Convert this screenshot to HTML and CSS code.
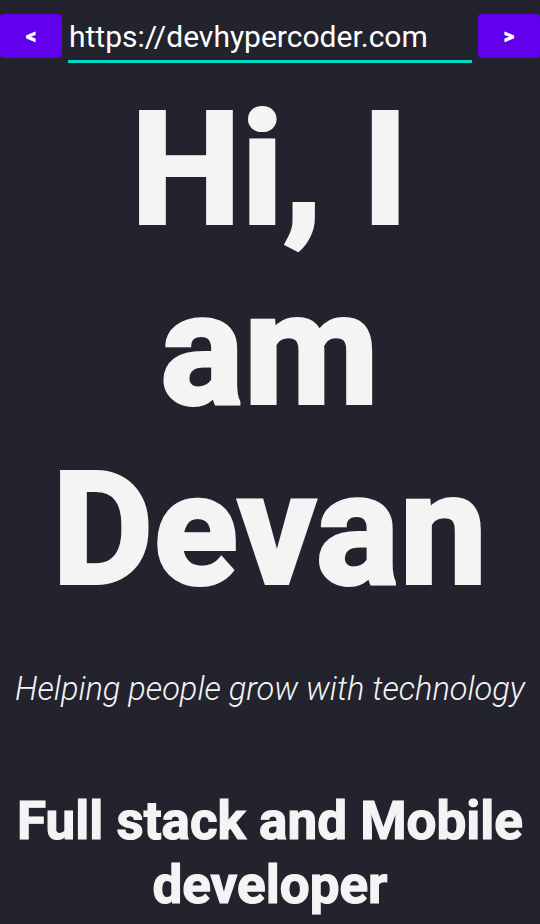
FILE: index.html
```html
<!DOCTYPE html>
<html>
<head>
<meta charset="utf-8">
<link rel="stylesheet" href="styles.css">
</head>
<body>
<div class="topbar">
  <button class="nav-btn">&lt;</button>
  <div class="url">https://devhypercoder.com</div>
  <button class="nav-btn">&gt;</button>
</div>
<main class="hero">
  <h1 class="title">Hi, I am Devan</h1>
  <p class="tagline">Helping people grow with technology</p>
  <h2 class="role">Full stack and Mobile developer</h2>
</main>
</body>
</html>
```
FILE: styles.css
```css
html, body {
  margin: 0;
  padding: 0;
  background: #23232e;
  height: 100%;
  overflow: hidden;
}
body {
  font-family: Roboto, "Liberation Sans", sans-serif;
  color: #f4f4f4;
}
.topbar {
  display: flex;
  align-items: flex-start;
  padding-top: 14px;
  gap: 6px;
}
.nav-btn {
  width: 62px;
  height: 44px;
  border: none;
  border-radius: 4px;
  background: #6200ee;
  color: #fff;
  font-family: Roboto, sans-serif;
  font-weight: 700;
  font-size: 20px;
  -webkit-text-stroke: 0.8px #fff;
  padding: 0;
  flex: none;
}
.url {
  flex: 1;
  font-size: 30px;
  line-height: 46px;
  height: 46px;
  border-bottom: 3px solid #03dac5;
  padding-left: 1px;
  color: #fff;
}
.hero {
  text-align: center;
  display: flex;
  flex-direction: column;
  align-items: center;
}
.title {
  margin: 17px 0 0;
  max-width: 470px;
  font-size: 155px;
  line-height: 180px;
  font-weight: 700;
  -webkit-text-stroke: 4px #f4f4f4;
  letter-spacing: 1px;
}
.tagline {
  margin: 50px 0 0;
  font-size: 32.6px;
  font-style: italic;
  font-weight: 300;
}
.role {
  margin: 81px 0 0;
  font-size: 53px;
  line-height: 64px;
  font-weight: 700;
  -webkit-text-stroke: 1.2px #f4f4f4;
}
```
